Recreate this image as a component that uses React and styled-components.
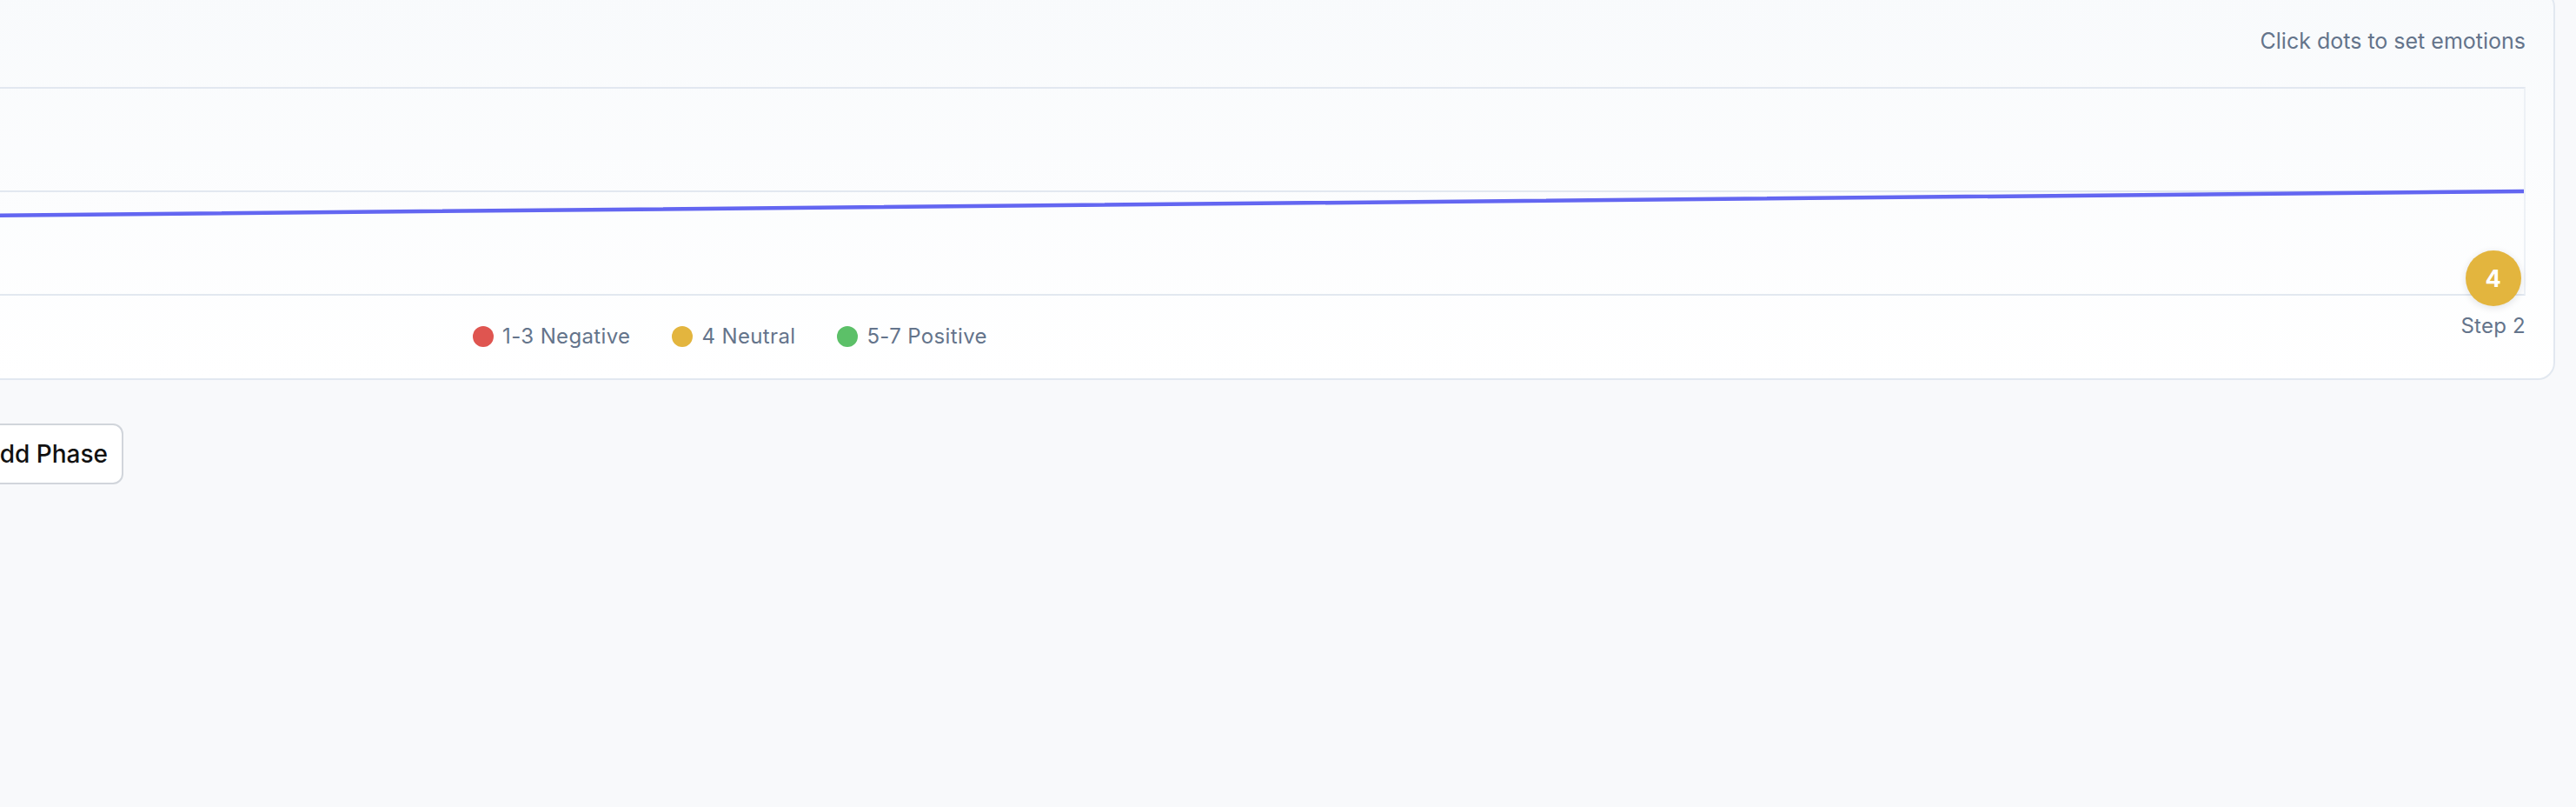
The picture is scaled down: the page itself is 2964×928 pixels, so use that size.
import React from "react";
import styled, { createGlobalStyle } from "styled-components";
import { Plus } from "lucide-react";

const MIN_VALUE = 1;
const MAX_VALUE = 7;

const STEPS = [
  { id: 1, label: "Step 1", value: 3 },
  { id: 2, label: "Step 2", value: 4 },
];

const LEGEND = [
  { label: "1-3 Negative", color: "#df5550" },
  { label: "4 Neutral", color: "#e3b53e" },
  { label: "5-7 Positive", color: "#5cc068" },
];

// colour of a dot from its emotion value
const emotionColor = (value) => {
  if (value <= 3) return "#df5550";
  if (value === 4) return "#e3b53e";
  return "#5cc068";
};

// value -> y position in a 0..100 viewBox
const valueToY = (value) =>
  ((MAX_VALUE - value) / (MAX_VALUE - MIN_VALUE)) * 100;

const GlobalStyle = createGlobalStyle`
  html, body {
    margin: 0;
    padding: 0;
  }
  body {
    background: #f8f9fb;
    font-family: "Inter", "Liberation Sans", sans-serif;
    overflow: hidden;
  }
  * {
    box-sizing: border-box;
  }
`;

const Page = styled.main`
  margin: -36px 0 0 -1284px;
  width: calc(100% + 1284px);
  padding: 24px;
`;

const Card = styled.section`
  border: 2px solid #e2e8f0;
  border-radius: 20px;
  padding: 32px;
  background: linear-gradient(180deg, #f8fafc 0%, #ffffff 100%);
`;

const Header = styled.div`
  display: flex;
  align-items: center;
  justify-content: space-between;
  height: 48px;
  margin-bottom: 30px;
`;

const Title = styled.h3`
  margin: 0;
  font-size: 32px;
  font-weight: 600;
  color: #0f172a;
`;

const Hint = styled.span`
  font-size: 25px;
  line-height: 36px;
  margin-top: 2px;
  color: #64748b;
`;

const ChartWrap = styled.div`
  position: relative;
`;

const Plot = styled.div`
  height: 236px;
  box-sizing: content-box;
  border-top: 2px solid #e2e8f0;
  border-bottom: 2px solid #e2e8f0;
  border-right: 2px solid #edf1f6;

  svg {
    display: block;
    width: 100%;
    height: 100%;
  }
`;

const StepsRow = styled.div`
  position: absolute;
  top: 188px;
  left: 0;
  right: 0;
  display: flex;
  justify-content: space-between;
`;

const StepColumn = styled.div`
  display: flex;
  flex-direction: column;
  align-items: center;
  gap: 7px;
`;

const StepDot = styled.button`
  width: 64px;
  height: 64px;
  border: none;
  border-radius: 50%;
  background: ${(p) => p.$color};
  color: #fff;
  font-family: inherit;
  font-size: 27px;
  font-weight: 700;
  display: flex;
  align-items: center;
  justify-content: center;
  box-shadow: 0 2px 8px rgba(15, 23, 42, 0.12);
  cursor: pointer;
`;

const StepLabel = styled.span`
  font-size: 24px;
  line-height: 32px;
  letter-spacing: 0.01em;
  color: #64748b;
  white-space: nowrap;
`;

const Legend = styled.div`
  display: flex;
  justify-content: center;
  gap: 48px;
  margin-top: 31px;
  font-size: 24px;
  line-height: 32px;
  letter-spacing: 0.015em;
  color: #64748b;
`;

const LegendItem = styled.div`
  display: flex;
  align-items: center;
  gap: 10px;
`;

const LegendDot = styled.span`
  width: 24px;
  height: 24px;
  border-radius: 50%;
  background: ${(p) => p.$color};
`;

const ButtonRow = styled.div`
  display: flex;
  margin-top: 50px;
  padding-left: 1186px;
`;

const AddButton = styled.button`
  display: flex;
  align-items: center;
  gap: 8px;
  height: 70px;
  padding: 0 16px;
  border: 2px solid #d1d5db;
  border-radius: 12px;
  background: #fff;
  font-family: inherit;
  font-size: 28px;
  font-weight: 500;
  color: #111;
  cursor: pointer;
`;

const EmotionChart = ({ steps }) => {
  const points = steps
    .map((s, i) => `${(i / (steps.length - 1)) * 100},${valueToY(s.value)}`)
    .join(" ");

  return (
    <ChartWrap>
      <Plot>
        <svg viewBox="0 0 100 100" preserveAspectRatio="none">
          <line
            x1="0"
            y1="50"
            x2="100"
            y2="50"
            stroke="#e2e8f0"
            strokeWidth="2"
            vectorEffect="non-scaling-stroke"
          />
          <polyline
            points={points}
            fill="none"
            stroke="#6366f1"
            strokeWidth="4.5"
            strokeLinecap="round"
            vectorEffect="non-scaling-stroke"
          />
        </svg>
      </Plot>
      <StepsRow>
        {steps.map((s) => (
          <StepColumn key={s.id}>
            <StepDot $color={emotionColor(s.value)}>{s.value}</StepDot>
            <StepLabel>{s.label}</StepLabel>
          </StepColumn>
        ))}
      </StepsRow>
    </ChartWrap>
  );
};

const App = () => {
  return (
    <>
      <GlobalStyle />
      <Page>
        <Card>
          <Header>
            <Title>Emotional Journey</Title>
            <Hint>Click dots to set emotions</Hint>
          </Header>
          <EmotionChart steps={STEPS} />
          <Legend>
            {LEGEND.map((item) => (
              <LegendItem key={item.label}>
                <LegendDot $color={item.color} />
                {item.label}
              </LegendItem>
            ))}
          </Legend>
        </Card>
        <ButtonRow>
          <AddButton>
            <Plus size={28} strokeWidth={2} />
            Add Phase
          </AddButton>
        </ButtonRow>
      </Page>
    </>
  );
};

export default App;
